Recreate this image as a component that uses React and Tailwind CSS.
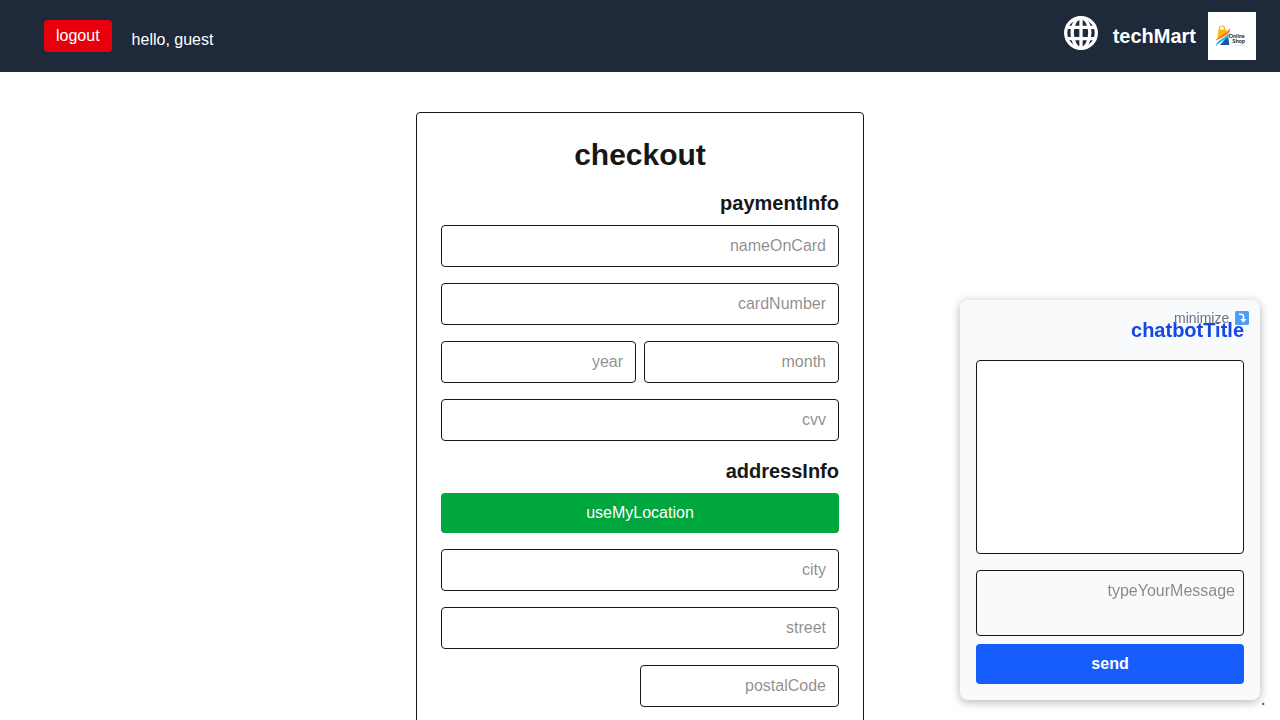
import React from "react";

function Field({ label, className = "" }) {
  return (
    <input
      placeholder={label}
      className={`h-[42px] min-w-0 rounded border border-[#171717] px-3 py-2 text-[#171717] placeholder:text-[#171717]/50 ${className}`}
    />
  );
}

function Globe() {
  return (
    <svg className="h-[34px] w-[34px]" viewBox="0 0 34 34" fill="none" stroke="#fff" strokeWidth="3.300">
      <circle cx="17" cy="17" r="15.3" />
      <ellipse cx="17" cy="17" rx="8.8" ry="15.2" />
      <path d="M17 2v30M3.500 11.400h27M3.500 22.600h27" />
    </svg>
  );
}

function Logo() {
  return (
    <svg className="h-12 w-12 bg-white" viewBox="0 0 48 48" direction="ltr">
      <path d="M9.500 26l.8-8.500h8l1.200 3-8 5z" fill="#fdb813" />
      <path d="M11.500 18v-1.500a2.500 2.500 0 0 1 5 0v1.500" fill="none" stroke="#fdb813" strokeWidth="1.200" />
      <path d="M12 33L20 24l1.400 9z" fill="#1554a5" />
      <path d="M7.500 28.500C10 24.500 17 22 22 16.500c1 4.500-5 8.500-14.500 12z" fill="#f47b29" />
      <path d="M8 34C8 28.500 16 27 22.500 20.500 21 28 13 28 8 34z" fill="#22b3e6" />
      <text x="20.800" y="25.800" fontSize="6.200" fontWeight="700" fill="#222" textLength="15.800" lengthAdjust="spacingAndGlyphs" fontFamily="Lato, sans-serif">Online</text>
      <text x="24.300" y="31.200" fontSize="6.200" fontWeight="700" fill="#222" textLength="12.800" lengthAdjust="spacingAndGlyphs" fontFamily="Lato, sans-serif">Shop</text>
      <path d="M25 33.300h11.500" stroke="#ddd" strokeWidth=".7" />
    </svg>
  );
}

function MinimizeArrow() {
  return (
    <svg className="h-[14px] w-[14px]" viewBox="0 0 14 14">
      <rect width="14" height="14" rx="1.500" fill="#4d9ff5" />
      <path d="M4 3.200h2Q8.500 3.200 8.500 5.500v3" fill="none" stroke="#fff" strokeWidth="1.600" />
      <path d="M5.300 8h6.200l-3.100 3.700z" fill="#fff" />
    </svg>
  );
}

export default function App() {
  return (
    <div
      dir="rtl"
      className="h-screen overflow-hidden bg-white font-['Liberation_Sans',Arial,sans-serif] text-base text-[#171717]"
    >
      <header className="flex h-[72px] items-center justify-between bg-gray-800 pr-6 pl-11 text-white">
        <div className="flex items-center">
          <Logo />
          <span className="mr-3 text-xl font-bold">techMart</span>
          <div className="mr-[15px] mb-[6px]">
            <Globe />
          </div>
        </div>
        <div className="flex items-center">
          <span dir="ltr" className="pt-2">hello, guest</span>
          <button className="mr-5 h-8 rounded bg-red-600 px-3">logout</button>
        </div>
      </header>

      <main className="mx-auto mt-10 flex h-[760px] w-[448px] flex-col rounded border border-[#171717] p-6">
        <h1 className="mb-4 text-center text-3xl font-bold">checkout</h1>
        <h2 className="mb-2 text-xl font-semibold">paymentInfo</h2>
        <div className="flex flex-col gap-4">
          <Field label="nameOnCard" />
          <Field label="cardNumber" />
          <div className="flex gap-2">
            <Field label="month" className="flex-1" />
            <Field label="year" className="flex-1" />
          </div>
          <Field label="cvv" />
        </div>
        <h2 className="mt-4 mb-2 text-xl font-semibold">addressInfo</h2>
        <div className="flex flex-col gap-4">
          <button className="h-10 rounded bg-green-600 text-white">useMyLocation</button>
          <Field label="city" />
          <Field label="street" />
          <Field label="postalCode" className="w-1/2" />
        </div>
      </main>

      <aside className="fixed right-5 bottom-5 flex h-[400px] w-[300px] flex-col rounded-lg bg-gray-50 p-4 shadow-[0_2px_10px_rgba(0,0,0,0.3)]">
        <button className="absolute top-2 left-[214px] flex h-5 items-center gap-1.5 text-sm text-gray-500" dir="ltr">
          minimize
          <MinimizeArrow />
        </button>
        <h2 className="mb-4 text-xl font-bold text-blue-700">chatbotTitle</h2>
        <div className="h-[194px] rounded border border-[#171717] bg-white" />
        <textarea
          placeholder="typeYourMessage"
          className="mt-4 h-[66px] resize-none rounded border border-[#171717] p-2 placeholder:text-[#171717]/50"
        />
        <button className="mt-2 h-10 rounded bg-blue-600 font-bold text-white">send</button>
        <span className="absolute -right-[6px] -bottom-2 text-xl leading-5 text-gray-600">.</span>
      </aside>
    </div>
  );
}
